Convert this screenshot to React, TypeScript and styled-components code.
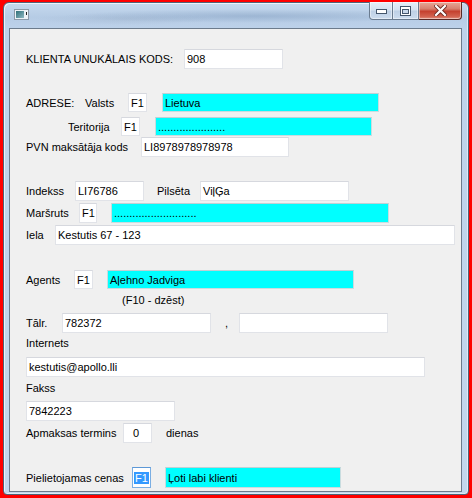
import React from 'react';
import styled, { createGlobalStyle } from 'styled-components';

const Global = createGlobalStyle`
  html, body { margin: 0; padding: 0; background: #ff0000; }
  body { width: 472px; height: 498px; overflow: hidden; font-family: "Liberation Sans", Arial, sans-serif; }
`;

const Desktop = styled.div`
  width: 472px;
  height: 498px;
  box-sizing: border-box;
  padding: 2px 3px 3px 3px;
  background: #ff0000;
`;

const Window = styled.div`
  width: 466px;
  height: 493px;
  box-sizing: border-box;
  border: 1px solid #4f6379;
  border-radius: 6px 6px 4px 4px;
  padding: 0 6px 2px 5px;
  display: flex;
  flex-direction: column;
  box-shadow: inset 1px 1px 0 rgba(255, 255, 255, 0.7), inset -1px -1px 0 rgba(255, 255, 255, 0.5);
  background:
    radial-gradient(ellipse 190px 7px at 250px 13px, rgba(110, 140, 178, 0.35), rgba(110, 140, 178, 0) 100%),
    radial-gradient(ellipse 90px 6px at 120px 16px, rgba(150, 170, 195, 0.3), rgba(150, 170, 195, 0) 100%),
    linear-gradient(180deg, #c6d9ee 0px, #b6cce5 14px, #bdd2ea 26px, #c3d7ed 100%);
`;

const TitleBar = styled.div`
  height: 25px;
  flex: none;
  display: flex;
  justify-content: space-between;
  align-items: flex-start;
`;

const AppIcon = styled.svg`
  margin: 6px 0 0 5px;
  flex: none;
`;

const CaptionGroup = styled.div`
  display: flex;
  margin-top: -1px;
  margin-right: 0;
  height: 18px;
`;

const CapBtn = styled.div<{ $w: number; $kind: 'normal' | 'close'; $pos: 'first' | 'mid' | 'last' }>`
  width: ${(p) => p.$w}px;
  height: 18px;
  box-sizing: border-box;
  display: flex;
  align-items: center;
  justify-content: center;
  border: 1px solid ${(p) => (p.$kind === 'close' ? '#5a2a26' : '#6a7b8f')};
  border-top: none;
  border-left-width: ${(p) => (p.$pos === 'first' ? 1 : 0)}px;
  border-radius: ${(p) => (p.$pos === 'first' ? '0 0 0 4px' : p.$pos === 'last' ? '0 0 4px 0' : '0')};
  box-shadow: inset 0 0 0 1px rgba(255, 255, 255, 0.45);
  background: ${(p) =>
    p.$kind === 'close'
      ? 'linear-gradient(180deg, #e7a797 0%, #d7806f 40%, #c5412f 55%, #d2624f 85%, #e0907f 100%)'
      : 'linear-gradient(180deg, #e6eef8 0%, #d5e2f0 45%, #bfd1e6 55%, #cddcee 100%)'};
`;

const Client = styled.div`
  flex: 1;
  box-sizing: border-box;
  border: 1px solid #6c7b8c;
  background: #f0f0f0;
  padding: 0 0 0 16px;
  display: flex;
  flex-direction: column;
  font-size: 11px;
  color: #000;
`;

const Row = styled.div<{ $mt: number; $h: number }>`
  display: flex;
  align-items: center;
  margin-top: ${(p) => p.$mt}px;
  height: ${(p) => p.$h}px;
  flex: none;
`;

const Label = styled.span<{ $w?: number; $ml?: number }>`
  flex: none;
  white-space: nowrap;
  width: ${(p) => (p.$w ? `${p.$w}px` : 'auto')};
  margin-left: ${(p) => p.$ml ?? 0}px;
  line-height: 14px;
`;

const Edit = styled.div<{ $w: number; $ml?: number; $cyan?: boolean; $focus?: boolean; $pad?: number }>`
  flex: none;
  box-sizing: border-box;
  width: ${(p) => p.$w}px;
  height: 100%;
  margin-left: ${(p) => p.$ml ?? 0}px;
  padding-left: ${(p) => p.$pad ?? 2}px;
  display: flex;
  align-items: center;
  white-space: nowrap;
  overflow: hidden;
  background: ${(p) => (p.$cyan ? '#00ffff' : '#ffffff')};
  border: 1px solid ${(p) => (p.$focus ? '#7aaee3' : p.$cyan ? '#c9dcdf' : '#e1e3e8')};
  border-top-color: ${(p) => (p.$focus ? '#5d98d6' : p.$cyan ? '#bfd0d4' : '#d6d8de')};
`;

const Selected = styled.span`
  background: #3399ff;
  color: #ffffff;
  padding: 0 1px;
`;

export default function App() {
  return (
    <>
      <Global />
      <Desktop>
        <Window>
          <TitleBar>
            <AppIcon width="15" height="11" viewBox="0 0 15 11">
              <defs>
                <linearGradient id="ic" x1="0" y1="0" x2="1" y2="1">
                  <stop offset="0" stopColor="#2f6f78" />
                  <stop offset="1" stopColor="#8fb8c2" />
                </linearGradient>
              </defs>
              <rect x="0.5" y="0.5" width="14" height="10" fill="#eef2f6" stroke="#8c99a8" />
              <rect x="2" y="2" width="8" height="7" fill="url(#ic)" />
              <rect x="12" y="3" width="1" height="3" fill="#222" />
            </AppIcon>
            <CaptionGroup>
              <CapBtn $w={24} $kind="normal" $pos="first">
                <svg width="11" height="6" viewBox="0 0 11 6">
                  <rect x="0.5" y="1.5" width="10" height="4" fill="#fff" stroke="#44566c" />
                </svg>
              </CapBtn>
              <CapBtn $w={26} $kind="normal" $pos="mid">
                <svg width="11" height="10" viewBox="0 0 11 10">
                  <rect x="0.5" y="0.5" width="10" height="9" fill="#fff" stroke="#44566c" />
                  <rect x="2.5" y="3.5" width="6" height="4" fill="#c9d8ea" stroke="#44566c" />
                </svg>
              </CapBtn>
              <CapBtn $w={43} $kind="close" $pos="last">
                <svg width="13" height="11" viewBox="0 0 13 11">
                  <path d="M2 1 L11 10 M11 1 L2 10" stroke="#6a2a22" strokeWidth="4" strokeLinecap="square" />
                  <path d="M2 1 L11 10 M11 1 L2 10" stroke="#ffffff" strokeWidth="2.2" strokeLinecap="square" />
                </svg>
              </CapBtn>
            </CaptionGroup>
          </TitleBar>
          <Client>
            <Row $mt={20} $h={20}>
              <Label $w={158}>KLIENTA UNUKĀLAIS KODS:</Label>
              <Edit $w={99}>908</Edit>
            </Row>

            <Row $mt={24} $h={19}>
              <Label $w={59}>ADRESE:</Label>
              <Label $w={43}>Valsts</Label>
              <Edit $w={19}>F1</Edit>
              <Edit $w={217} $ml={15} $cyan>Lietuva</Edit>
            </Row>
            <Row $mt={5} $h={19}>
              <Label $ml={42} $w={53}>Teritorija</Label>
              <Edit $w={19}>F1</Edit>
              <Edit $w={217} $ml={15} $cyan>......................</Edit>
            </Row>
            <Row $mt={1} $h={20}>
              <Label $w={115}>PVN maksātāja kods</Label>
              <Edit $w={148}>LI8978978978978</Edit>
            </Row>

            <Row $mt={24} $h={20}>
              <Label $w={49}>Indekss</Label>
              <Edit $w={69}>LI76786</Edit>
              <Label $ml={13} $w={43}>Pilsēta</Label>
              <Edit $w={149}>ViļĢa</Edit>
            </Row>
            <Row $mt={2} $h={20}>
              <Label $w={53}>Maršruts</Label>
              <Edit $w={18}>F1</Edit>
              <Edit $w={278} $ml={14} $cyan>...........................</Edit>
            </Row>
            <Row $mt={2} $h={20}>
              <Label $w={29}>Iela</Label>
              <Edit $w={400}>Kestutis 67 - 123</Edit>
            </Row>

            <Row $mt={25} $h={19}>
              <Label $w={48}>Agents</Label>
              <Edit $w={19}>F1</Edit>
              <Edit $w={247} $ml={14} $cyan>Aļehno Jadviga</Edit>
            </Row>
            <Row $mt={4} $h={14}>
              <Label $ml={96}>(F10 - dzēst)</Label>
            </Row>
            <Row $mt={6} $h={20}>
              <Label $w={36}>Tālr.</Label>
              <Edit $w={149}>782372</Edit>
              <Label $ml={14} $w={14}>,</Label>
              <Edit $w={149}></Edit>
            </Row>
            <Row $mt={3} $h={14}>
              <Label>Internets</Label>
            </Row>
            <Row $mt={7} $h={20}>
              <Edit $w={399}>kestutis@apollo.lli</Edit>
            </Row>
            <Row $mt={4} $h={14}>
              <Label>Fakss</Label>
            </Row>
            <Row $mt={6} $h={20}>
              <Edit $w={149}>7842223</Edit>
            </Row>
            <Row $mt={2} $h={20}>
              <Label $w={97}>Apmaksas termins</Label>
              <Edit $w={29} $pad={9}>0</Edit>
              <Label $ml={14}>dienas</Label>
            </Row>

            <Row $mt={24} $h={21}>
              <Label $w={106}>Pielietojamas cenas</Label>
              <Edit $w={19} $focus $pad={1}>
                <Selected>F1</Selected>
              </Edit>
              <Edit $w={176} $ml={14} $cyan>Ļoti labi klienti</Edit>
            </Row>
          </Client>
        </Window>
      </Desktop>
    </>
  );
}
